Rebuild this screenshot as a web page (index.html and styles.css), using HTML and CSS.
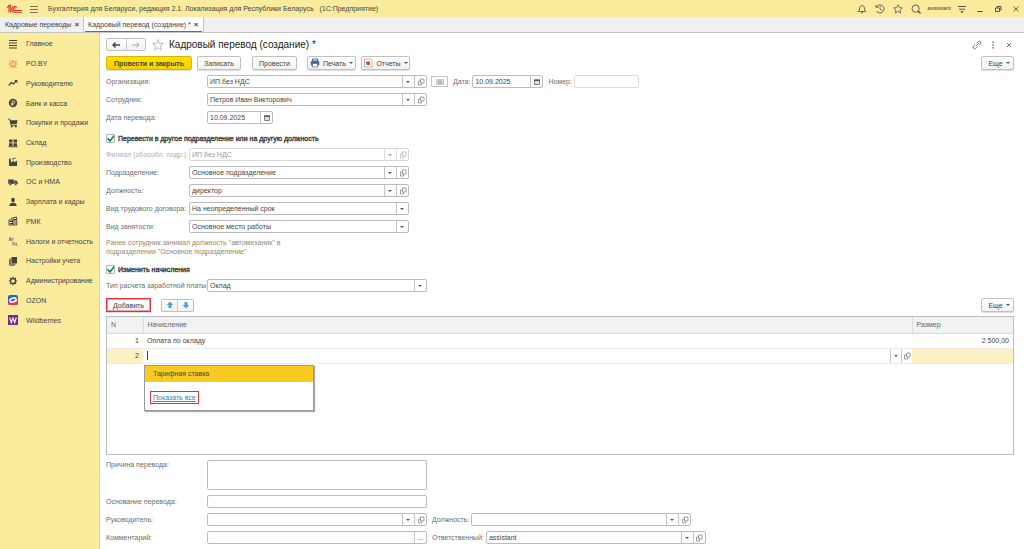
FILE: index.html
```html
<!DOCTYPE html>
<html lang="ru">
<head>
    <meta charset="UTF-8">
    <meta name="viewport" content="width=device-width, initial-scale=1.0">
    <title>Кадровый перевод (создание)</title>
    <link rel="stylesheet" href="styles.css">
</head>
<body>

<svg class="sprite" aria-hidden="true">
    <symbol id="i-open" viewBox="0 0 8 8"><path d="M3.500 1h3.500v4H3.500zM3.500 3H1.500v4h3V5" fill="none" stroke="#777" stroke-width=".7"/></symbol>
    <symbol id="i-cal" viewBox="0 0 8 8"><path d="M1.500 2h5v4.500h-5z" fill="#fff" stroke="#666" stroke-width=".8"/><path d="M1.200 1.500h5.600v1.700H1.200z" fill="#555"/><path d="M2 5h4" stroke="#999" stroke-width=".6"/></symbol>
</svg>

<header class="titlebar">
    <svg class="logo" viewBox="0 0 16 10"><g fill="none" stroke="#d9302c" stroke-width="1.100"><path d="M.6 3.500L2.500 1.700V8.500M4.200 8.500V1.200L1.800 1.200"/><path d="M10.300 3.500A2.900 2.900 0 1 0 8 8.300H15.500"/><path d="M9 4.200A1.300 1.300 0 1 0 8 6.500H15.500"/></g></svg>
    <button class="plain burger" aria-label="Меню"><svg viewBox="0 0 8 8"><path d="M0 1.500h8M0 4.500h8M0 7.500h8" stroke="#555" stroke-width=".8"/></svg></button>
    <span class="app-name">Бухгалтерия для Беларуси, редакция 2.1. Локализация для Республики Беларусь &nbsp; (1С:Предприятие)</span>
    <div class="title-tools">
        <button class="plain" aria-label="Уведомления"><svg viewBox="0 0 10 10"><path d="M1.200 7.500h7.600C7.500 6.500 7.600 5.500 7.400 4 7.200 2.400 6.200 1.500 5 1.500S2.800 2.400 2.600 4C2.400 5.500 2.500 6.500 1.200 7.500zM4 8.800h2" fill="none" stroke="#555" stroke-width=".9"/></svg></button>
        <button class="plain" aria-label="История"><svg viewBox="0 0 10 10"><path d="M1.500 3A4 4 0 1 1 1.500 7M1 1v2.300h2.300M5 2.500V5l2 1.500" fill="none" stroke="#555" stroke-width=".9"/></svg></button>
        <button class="plain" aria-label="Избранное"><svg viewBox="0 0 10 10"><path d="M5 .8l1.300 2.800 3 .3L7 6l.7 3L5 7.500 2.300 9 3 6 .7 3.900l3-.3z" fill="none" stroke="#555" stroke-width=".8"/></svg></button>
        <button class="plain" aria-label="Поиск"><svg viewBox="0 0 10 10"><circle cx="4.600" cy="4.600" r="3.600" fill="none" stroke="#555" stroke-width=".9"/><path d="M7 7l2.500 2.500" stroke="#444" stroke-width="1.300"/></svg></button>
        <span class="user">assistant</span>
        <button class="plain" aria-label="Настройки"><svg viewBox="0 0 10 10"><path d="M1 2.500h8M2 5.200h6" stroke="#444" stroke-width=".9"/><path d="M3.300 7.300h3.400L5 9.200z" fill="#444"/></svg></button>
        <button class="plain" aria-label="Свернуть"><svg viewBox="0 0 10 10"><path d="M2.500 7.500h5" stroke="#444"/></svg></button>
        <button class="plain" aria-label="Развернуть"><svg viewBox="0 0 10 10"><path d="M2.500 4h4v3.500h-4zM4 4V2.500h4v3.500H6.500" fill="none" stroke="#444" stroke-width=".9"/></svg></button>
        <button class="plain" aria-label="Закрыть"><svg viewBox="0 0 10 10"><path d="M2.500 2.500l5 5M7.500 2.500l-5 5" stroke="#555" stroke-width=".9"/></svg></button>
    </div>
</header>

<nav class="tabs">
    <a class="tab" href="#list">Кадровые переводы <span class="x">×</span></a>
    <a class="tab active" href="#doc">Кадровый перевод (создание) * <span class="x">×</span></a>
</nav>

<div class="workspace">
    <nav class="sidebar">
        <ul>
            <li><a href="#"><svg viewBox="0 0 10 10"><path d="M1 1.500h8M1 4h8M1 6.500h8M1 9h8" stroke="#444" stroke-width="1.100"/></svg>Главное</a></li>
            <li><a href="#"><svg viewBox="0 0 10 10"><path d="M5 3.800V1M5 6.200V9M3.700 4L1.500 2M6.300 4l2.200-2M3.700 6L2 8.500M6.300 6L8 8.500M3.300 5H.7M6.700 5h2.600" stroke="#e4513a" stroke-width=".9"/></svg>PO.BY</a></li>
            <li><a href="#"><svg viewBox="0 0 10 10"><path d="M.8 7.500L3.300 4.500l2 1.500L8 3.200" fill="none" stroke="#444" stroke-width="1.300"/><path d="M6.200 2h3.200v3.200z" fill="#444"/></svg>Руководителю</a></li>
            <li><a href="#"><svg viewBox="0 0 10 10"><circle cx="5" cy="5" r="4.200" fill="#444"/><path d="M4.200 8V2.800h1.300a1.300 1.300 0 0 1 0 2.700H3.200M3.200 6.700h2.500" fill="none" stroke="#faeb9d" stroke-width=".8"/></svg>Банк и касса</a></li>
            <li><a href="#"><svg viewBox="0 0 10 10"><path d="M.3 1.300h1.500l1.300 6h5.700" fill="none" stroke="#444"/><path d="M2 2.300h7.600L8.700 6H2.900z" fill="#444"/><circle cx="3.800" cy="8.600" r="1" fill="#444"/><circle cx="7.800" cy="8.600" r="1" fill="#444"/></svg>Покупки и продажи</a></li>
            <li><a href="#"><svg viewBox="0 0 10 10"><path d="M1 1.500h3.500v3H1zM5.500 1.500H9v3H5.500zM1 5.300h3.500v2.700H1zM5.500 5.300H9v2.700H5.500zM.5 8.300h9v.9h-9z" fill="#444"/></svg>Склад</a></li>
            <li><a href="#"><svg viewBox="0 0 10 10"><path d="M1 9V1.500h1.500L3 5.500l3-2v2l3-2V9z" fill="#444"/><path d="M4 2.200L7.500 1" stroke="#444"/></svg>Производство</a></li>
            <li><a href="#"><svg viewBox="0 0 10 10"><path d="M.3 2.500h5.500v4.500H.3zM6.300 3.500h2l1.500 2V7H6.300z" fill="#444"/><circle cx="2.300" cy="7.400" r="1.100" fill="#444" stroke="#faeb9d" stroke-width=".4"/><circle cx="7.700" cy="7.400" r="1.100" fill="#444" stroke="#faeb9d" stroke-width=".4"/></svg>ОС и НМА</a></li>
            <li><a href="#"><svg viewBox="0 0 10 10"><ellipse cx="5" cy="3" rx="1.800" ry="2.300" fill="#444"/><path d="M1.300 9c0-2.300 1.200-2.700 2.700-3.300h2C7.500 6.300 8.700 6.700 8.700 9z" fill="#444"/></svg>Зарплата и кадры</a></li>
            <li><a href="#"><svg viewBox="0 0 10 10"><path d="M1 4h3.500v5H1zM5 3.500h3.800V9H5z" fill="none" stroke="#444"/><path d="M3 2.500L8.500 1v2M2 5.500h2M6 5h2M6 7h2M2 7.500h2" fill="none" stroke="#444"/></svg>РМК</a></li>
            <li><a href="#"><svg viewBox="0 0 10 10"><path d="M1 5l1.300-3.700L3.300 5M1.600 3.800h1.500M4.300 5V2.500h1.500M5 6v3.300M7 6L5.200 7.600 7 9.300M9 7.500H7.800v1.700H9.300" fill="none" stroke="#555" stroke-width=".7"/></svg>Налоги и отчетность</a></li>
            <li><a href="#"><svg viewBox="0 0 10 10"><path d="M3.500 1H9v6.500H3.500z" fill="#444"/><path d="M2.700 2.200v6h5M1.500 3.300v6h5" fill="none" stroke="#444" stroke-width=".8"/></svg>Настройки учета</a></li>
            <li><a href="#"><svg viewBox="0 0 10 10"><circle cx="5" cy="5" r="2.500" fill="none" stroke="#444" stroke-width="1.300"/><path d="M5 .8v1.700M5 7.500v1.700M.8 5h1.700M7.500 5h1.700M2 2l1.200 1.200M6.800 6.800L8 8M8 2L6.800 3.200M3.200 6.800L2 8" stroke="#444" stroke-width="1.200"/></svg>Администрирование</a></li>
            <li><a href="#"><svg viewBox="0 0 10 10"><rect width="10" height="10" rx="2" fill="#1f61e8"/><path d="M0 7.500l10-3v3.500a2 2 0 0 1-2 2H2a2 2 0 0 1-2-2z" fill="#f13a4c"/><ellipse cx="5" cy="5" rx="4" ry="2.700" fill="#fff" transform="rotate(-15 5 5)"/><ellipse cx="5" cy="5" rx="2.500" ry="1.100" fill="#1f61e8" transform="rotate(-15 5 5)"/></svg>OZON</a></li>
            <li><a href="#"><svg viewBox="0 0 10 10"><rect width="10" height="10" fill="#7a2a8c"/><path d="M1.700 2.500l1.600 5L5 3l1.700 4.500 1.600-5" fill="none" stroke="#fff" stroke-width="1.100"/></svg>Wildberries</a></li>
        </ul>
    </nav>

    <main class="document">
        <div class="heading">
            <div class="btn-pair history">
                <button aria-label="Назад"><svg viewBox="0 0 10 10"><path d="M9 5H2M4.500 2.500L2 5l2.500 2.500" fill="none" stroke="#444" stroke-width="1.400"/></svg></button>
                <button aria-label="Вперед"><svg viewBox="0 0 10 10"><path d="M1 5h7M5.500 2.500L8 5 5.500 7.500" fill="none" stroke="#aaa"/></svg></button>
            </div>
            <button class="plain star" aria-label="В избранное"><svg viewBox="0 0 12 12"><path d="M6 .5l1.300 3.900 4.200.1-3.300 2.500 1.200 4L6 8.700 2.600 11l1.200-4L.5 4.500l4.200-.1z" fill="none" stroke="#b0b0b0" stroke-width=".8"/></svg></button>
            <h1>Кадровый перевод (создание) *</h1>
            <div class="heading-tools">
                <button class="plain" aria-label="Ссылка"><svg viewBox="0 0 10 10"><path d="M4.200 5.800L6.800 3.200M4.700 3.500L6.300 1.800a1.500 1.500 0 0 1 2.200 2.200L6.900 5.600M5.300 6.500L3.700 8.200A1.500 1.500 0 0 1 1.500 6L3.200 4.400" fill="none" stroke="#666" stroke-width=".9"/></svg></button>
                <button class="plain" aria-label="Действия"><svg viewBox="0 0 10 10"><path d="M5 1.500V3M5 4.300v1.500M5 7v1.500" stroke="#555" stroke-width="1.200"/></svg></button>
                <button class="plain" aria-label="Закрыть документ"><svg viewBox="0 0 10 10"><path d="M3 3l4 4M7 3L3 7" stroke="#666" stroke-width=".9"/></svg></button>
            </div>
        </div>

        <div class="toolbar">
            <button class="btn primary">Провести и закрыть</button>
            <button class="btn save">Записать</button>
            <button class="btn post">Провести</button>
            <button class="btn print"><svg viewBox="0 0 10 10"><path d="M2.500 1h5v2h-5z" fill="#fff" stroke="#456a8f"/><rect x=".7" y="3" width="8.600" height="4.500" rx="1" fill="#456a8f"/><path d="M2.500 5.500h5V9h-5z" fill="#fff" stroke="#456a8f" stroke-width=".7"/></svg>Печать<i class="caret"></i></button>
            <button class="btn reports"><svg viewBox="0 0 10 10"><path d="M1.500 1h6L9 2.500V9H1.500z" fill="#fff" stroke="#999" stroke-width=".7"/><path d="M3 3.500h2L6 3l1 1.500v2.500H3.500z" fill="#d8453d"/></svg>Отчеты<i class="caret"></i></button>
            <button class="btn more">Еще<i class="caret"></i></button>
        </div>

        <div class="form">
            <div class="row">
                <label for="org">Организация:</label>
                <div class="combo"><select id="org"><option>ИП без НДС</option></select><button aria-label="Открыть"><svg><use href="#i-open"/></svg></button></div>
                <button class="card-btn" aria-label="Реквизиты"><svg viewBox="0 0 8 6"><path d="M.5.500h7v5h-7z" fill="#d5dbe0" stroke="#a9b2ba" stroke-width=".6"/><path d="M2 2h4M2 3.200h4M2 4.400h4" stroke="#89939c" stroke-width=".6"/></svg></button>
                <label class="inline" for="date">Дата:</label>
                <div class="combo date"><input id="date" type="text" value="10.09.2025"><button aria-label="Календарь"><svg><use href="#i-cal"/></svg></button></div>
                <label class="inline number" for="num">Номер:</label>
                <input class="box num" id="num" type="text">
            </div>
            <div class="row">
                <label for="emp">Сотрудник:</label>
                <div class="combo"><select id="emp"><option>Петров Иван Викторович</option></select><button aria-label="Открыть"><svg><use href="#i-open"/></svg></button></div>
            </div>
            <div class="row">
                <label for="mdate">Дата перевода:</label>
                <div class="combo mdate"><input id="mdate" type="text" value="10.09.2025"><button aria-label="Календарь"><svg><use href="#i-cal"/></svg></button></div>
            </div>
        </div>

        <label class="check"><input type="checkbox" checked>Перевести в другое подразделение или на другую должность</label>

        <div class="form narrow">
            <div class="row off">
                <label for="branch">Филиал (обособл. подр.):</label>
                <div class="combo"><select id="branch" disabled><option>ИП без НДС</option></select><button aria-label="Открыть" disabled><svg><use href="#i-open"/></svg></button></div>
            </div>
            <div class="row">
                <label for="dep">Подразделение:</label>
                <div class="combo"><select id="dep"><option>Основное подразделение</option></select><button aria-label="Открыть"><svg><use href="#i-open"/></svg></button></div>
            </div>
            <div class="row">
                <label for="pos">Должность:</label>
                <div class="combo"><select id="pos"><option>директор</option></select><button aria-label="Открыть"><svg><use href="#i-open"/></svg></button></div>
            </div>
            <div class="row">
                <label for="contract">Вид трудового договора:</label>
                <div class="combo"><select id="contract"><option>На неопределенный срок</option></select></div>
            </div>
            <div class="row">
                <label for="kind">Вид занятости:</label>
                <div class="combo"><select id="kind"><option>Основное место работы</option></select></div>
            </div>
        </div>
        <p class="note">Ранее сотрудник занимал должность "автомеханик" в<br>подразделении "Основное подразделение"</p>

        <label class="check"><input type="checkbox" checked>Изменить начисления</label>

        <div class="form">
            <div class="row">
                <label for="pay">Тип расчета заработной платы:</label>
                <div class="combo"><select id="pay"><option>Оклад</option></select></div>
            </div>
        </div>

        <div class="toolbar list-tools">
            <button class="btn add">Добавить</button>
            <div class="btn-pair move">
                <button aria-label="Вверх"><svg viewBox="0 0 10 10"><path d="M5 1.500l3.300 3.500H6.500v3h-3V5H1.700z" fill="#4a9fdc"/></svg></button>
                <button aria-label="Вниз"><svg viewBox="0 0 10 10"><path d="M5 8.500L1.700 5h1.800V2h3v3h1.800z" fill="#4a9fdc"/></svg></button>
            </div>
            <button class="btn more">Еще<i class="caret"></i></button>
        </div>

        <div class="table-wrap">
            <table>
                <thead>
                    <tr><th class="col-n">N</th><th>Начисление</th><th class="col-size">Размер</th></tr>
                </thead>
                <tbody>
                    <tr><td class="n">1</td><td>Оплата по окладу</td><td class="size">2 500,00</td></tr>
                    <tr class="current">
                        <td class="n">2</td>
                        <td class="edit">
                            <div class="cell-editor">
                                <i class="cursor"></i>
                                <input type="text" aria-label="Начисление">
                                <button aria-label="Выбрать"><i class="caret"></i></button>
                                <button aria-label="Открыть"><svg><use href="#i-open"/></svg></button>
                            </div>
                            <div class="popup">
                                <button class="option">Тарифная ставка</button>
                                <a href="#all">Показать все</a>
                            </div>
                        </td>
                        <td class="size"></td>
                    </tr>
                </tbody>
            </table>
        </div>

        <div class="form footer">
            <div class="row top">
                <label for="reason">Причина перевода:</label>
                <textarea class="box" id="reason"></textarea>
            </div>
            <div class="row">
                <label for="basis">Основание перевода:</label>
                <input class="box" id="basis" type="text">
            </div>
            <div class="row">
                <label for="head">Руководитель:</label>
                <div class="combo"><select id="head"><option></option></select><button aria-label="Открыть"><svg><use href="#i-open"/></svg></button></div>
                <label class="inline" for="headpos">Должность:</label>
                <div class="combo"><select id="headpos"><option></option></select><button aria-label="Открыть"><svg><use href="#i-open"/></svg></button></div>
            </div>
            <div class="row">
                <label for="comment">Комментарий:</label>
                <div class="combo"><input id="comment" type="text"><button aria-label="Редактировать">...</button></div>
                <label class="inline" for="resp">Ответственный:</label>
                <div class="combo"><select id="resp"><option>assistant</option></select><button aria-label="Открыть"><svg><use href="#i-open"/></svg></button></div>
            </div>
        </div>
    </main>
</div>

</body>
</html>
```

FILE: styles.css
```css
* {
    box-sizing: border-box;
}
body {
    margin: 0;
    height: 100vh;
    display: flex;
    flex-direction: column;
    font-family: "Liberation Sans", Arial, sans-serif;
    font-size: 7px;
    line-height: 9px;
    color: #444;
    background: #fff;
}
button, input, select, textarea {
    font: inherit;
    color: inherit;
    margin: 0;
    padding: 0;
    border: none;
    background: none;
    border-radius: 0;
    outline: none;
}
button {
    display: flex;
    align-items: center;
    justify-content: center;
    cursor: pointer;
}
a {
    color: inherit;
    text-decoration: none;
}
svg {
    display: block;
    width: 10px;
    height: 10px;
    flex: none;
}
.sprite {
    position: absolute;
    width: 0;
    height: 0;
}
.caret {
    border: 2px solid transparent;
    border-top-color: #555;
    border-bottom: none;
}

/* Заголовок приложения */
.titlebar {
    flex: none;
    height: 17px;
    padding: 0 3px 0 6px;
    display: flex;
    align-items: center;
    background: #faeb9d;
}
.logo {
    width: 17px;
    height: 10px;
}
.burger {
    margin: 0 10px 0 7px;
}
.burger svg {
    width: 8px;
    height: 8px;
}
.title-tools {
    margin-left: auto;
    display: flex;
    align-items: center;
    gap: 8px;
}
.user {
    margin: 0 -2px;
    font-size: 6px;
}

/* Вкладки */
.tabs {
    flex: none;
    height: 16px;
    display: flex;
    background: #f0f0f0;
    border-bottom: 1px solid #c4c4c4;
}
.tab {
    display: flex;
    align-items: center;
    gap: 3px;
    padding: 0 4px 0 5px;
    border-right: 1px solid #c4c4c4;
}
.tab.active {
    padding-left: 4px;
    background: linear-gradient(#1a9a50, #1a9a50) center bottom / calc(100% - 2px) 1px no-repeat #fff;
}
.x {
    font-size: 8px;
    font-weight: bold;
}

.workspace {
    flex: 1;
    min-height: 0;
    display: flex;
}

/* Панель разделов */
.sidebar {
    flex: none;
    width: 100px;
    background: #faeb9d;
    border-right: 1px solid #e3d68c;
}
.sidebar ul {
    list-style: none;
    margin: 0;
    padding: 0;
    height: 297px;
    display: grid;
    grid-template-rows: repeat(15, 1fr);
    padding-top: 1px;
}
.sidebar a {
    height: 100%;
    padding-left: 8px;
    display: flex;
    align-items: center;
    gap: 8px;
}

/* Документ */
.document {
    flex: 1;
    min-width: 0;
    padding: 5px 10px 5px 6px;
    display: flex;
    flex-direction: column;
}
.heading {
    display: flex;
    align-items: center;
    height: 13px;
}
.btn-pair {
    display: flex;
    height: 13px;
    border: 1px solid #c0c0c0;
    border-radius: 2px;
    background: linear-gradient(#fff, #f0f0f0);
}
.btn-pair button {
    flex: 1;
}
.btn-pair button + button {
    border-left: 1px solid #c8c8c8;
}
.history {
    width: 40px;
}
.star {
    margin: 0 5px 0 6px;
}
.star svg {
    width: 12px;
    height: 12px;
}
h1 {
    margin: 0;
    font-size: 10px;
    line-height: 12px;
    font-weight: normal;
    color: #222;
}
.heading-tools {
    margin-left: auto;
    display: flex;
    gap: 6px;
}

.toolbar {
    margin-top: 5px;
    display: flex;
    align-items: center;
    height: 14px;
}
.btn {
    height: 14px;
    border: 1px solid #c0c0c0;
    border-radius: 2px;
    background: linear-gradient(#fff, #f2f2f2);
    box-shadow: 0 1px 1px #ddd;
    gap: 3px;
}
.primary {
    width: 86px;
    margin-right: 5px;
    font-weight: bold;
    border-color: #d8b400;
    background: linear-gradient(#ffe000, #f6d000);
}
.save {
    width: 44px;
    margin-right: 11px;
}
.post {
    width: 45px;
    margin-right: 10px;
}
.print {
    width: 49px;
    margin-right: 5px;
}
.reports {
    width: 49px;
}
.more {
    width: 33px;
    margin-left: auto;
    padding-left: 3px;
}

/* Поля */
.form {
    margin-top: 5px;
    display: flex;
    flex-direction: column;
    gap: 5px;
}
.row {
    display: flex;
    align-items: center;
    height: 13px;
}
.row label {
    flex: none;
    width: 101px;
    color: #6c6c6c;
    white-space: nowrap;
}
.narrow label {
    width: 83px;
}
.row .inline {
    width: auto;
    margin: 0 2px 0 5px;
}
.combo, .box {
    width: 220px;
    height: 13px;
    border: 1px solid #bcbcbc;
    border-radius: 2px;
    background: #fff;
}
.combo {
    display: flex;
}
.combo select, .combo input {
    flex: 1;
    min-width: 0;
    padding: 0 2px;
}
.combo select {
    appearance: none;
    background:
        url("data:image/svg+xml,%3Csvg xmlns='http://www.w3.org/2000/svg' viewBox='0 0 4 2'%3E%3Cpath d='M0 0h4L2 2z' fill='%23555'/%3E%3C/svg%3E") right 4px center / 4px 2px no-repeat,
        linear-gradient(#c4c4c4, #c4c4c4) right 11px top / 1px 100% no-repeat;
}
.combo button {
    width: 12px;
    border-left: 1px solid #c4c4c4;
}
.combo svg, .cell-editor svg {
    width: 8px;
    height: 8px;
}
.off {
    opacity: 0.55;
}
.off select {
    opacity: 1;
}
.card-btn {
    width: 17px;
    height: 11px;
    margin-left: 4px;
    border: 1px solid #c4c4c4;
}
.card-btn svg {
    width: 8px;
    height: 6px;
}
.combo.date {
    width: 71px;
}
.combo.mdate {
    width: 66px;
}
.num {
    width: 65px;
    border-color: #dcdcdc;
}

.check {
    display: flex;
    align-items: center;
    gap: 3px;
    height: 9px;
    margin-top: 10px;
    -webkit-text-stroke: 0.4px #444;
}
.check input {
    appearance: none;
    width: 9px;
    height: 9px;
    border: 1px solid #b4b4b4;
    border-radius: 1px;
    background: url("data:image/svg+xml,%3Csvg xmlns='http://www.w3.org/2000/svg' viewBox='0 0 8 8'%3E%3Cpath d='M1 3.500l2.300 2.700L7.300 1' fill='none' stroke='%2300884a' stroke-width='1.500'/%3E%3C/svg%3E") center / 8px 8px no-repeat;
}
.note {
    margin: 5px 0 0;
    color: #94876f;
}
.note + .check {
    margin-top: 9px;
}

.list-tools {
    margin-top: 6px;
}
.add {
    width: 45px;
    margin-right: 10px;
    border: 1px solid #e03038;
    border-radius: 0;
    outline: 1px solid #f3a0a4;
    outline-offset: -2px;
}
.move {
    width: 33px;
}

/* Таблица начислений */
.table-wrap {
    flex: 1;
    min-height: 60px;
    margin-top: 4px;
    border: 1px solid #bdbdbd;
}
table {
    width: 100%;
    border-collapse: collapse;
    table-layout: fixed;
}
th {
    height: 16px;
    padding: 0 4px;
    font-weight: normal;
    text-align: left;
    color: #666;
    background: #f2f2f2;
    border-bottom: 1px solid #d6d6d6;
}
th + th {
    border-left: 1px solid #dcdcdc;
}
.col-n {
    width: 36px;
}
.col-size {
    width: 101px;
}
td {
    height: 15px;
    padding: 0 4px;
    border-bottom: 1px solid #ececec;
}
.n, .size {
    text-align: right;
}
.current .n, .current .size {
    background: #fff0c4;
}
.current .edit {
    position: relative;
    padding: 0;
}
.cell-editor {
    display: flex;
    height: 14px;
    align-items: center;
}
.cell-editor input {
    flex: 1;
    min-width: 0;
}
.cell-editor button {
    width: 11px;
    height: 14px;
    border-left: 1px solid #c4c4c4;
}
.cursor {
    width: 1px;
    height: 9px;
    margin-left: 4px;
    background: #444;
}
.popup {
    position: absolute;
    z-index: 1;
    top: 16px;
    left: 1px;
    width: 170px;
    height: 46px;
    border: 1px solid #999;
    background: #fff;
    box-shadow: 1px 1px 1px #aaa;
}
.option {
    width: 100%;
    height: 16px;
    padding-left: 8px;
    justify-content: flex-start;
    background: #f9cb20;
}
.popup a {
    display: inline-block;
    margin: 9px 0 0 5px;
    padding: 1px 2px;
    border: 1px solid #e03038;
    color: #2c86c8;
    text-decoration: underline;
}

/* Нижние поля */
.row.top {
    height: 30px;
    align-items: flex-start;
}
textarea.box {
    height: 30px;
    resize: none;
}
```
